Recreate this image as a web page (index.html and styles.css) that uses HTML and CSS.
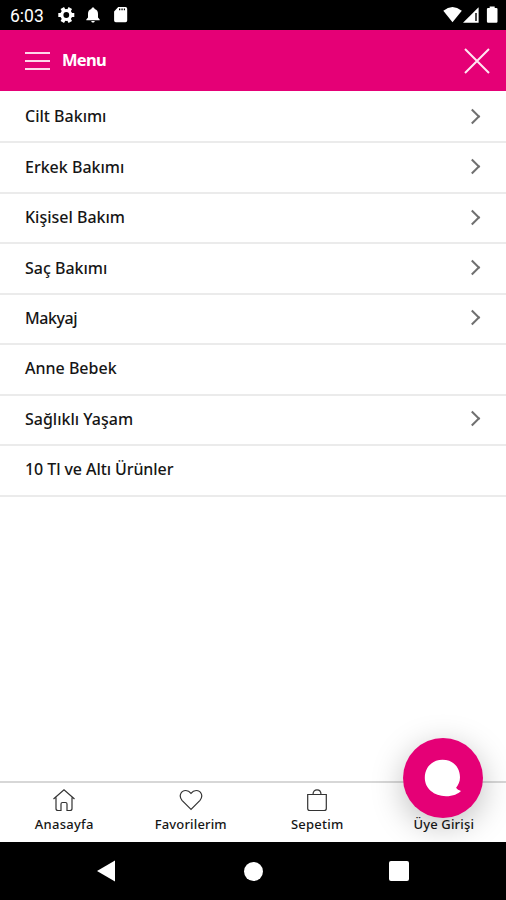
FILE: index.html
```html
<!DOCTYPE html>
<html lang="tr">
<head>
<meta charset="utf-8">
<title>Menu</title>
<link rel="stylesheet" href="styles.css">
</head>
<body>
<div class="screen">
  <div class="status">
    <span class="clock">6:03</span>
    <svg class="status-left" width="72" height="18" viewBox="0 0 72 18" fill="#fff">
      <g transform="translate(9.300 9)">
        <circle r="4.500" fill="none" stroke="#fff" stroke-width="3.200"/>
        <path stroke="#fff" stroke-width="4" d="M-4 -6.900l1.500 2.600M4 -6.900l-1.500 2.600M-4 6.900l1.500-2.600M4 6.900l-1.500-2.600M-8 0h3M5 0h3"/>
      </g>
      <path d="M36 1.500c1 0 1.600.6 1.600 1.600 2.500.7 3.400 2.600 3.400 4.900v3.500l1.700 1.900v.8H29.300v-.8l1.700-1.900V8c0-2.300.9-4.200 3.400-4.900 0-1 .6-1.600 1.600-1.600zM34.300 15h3.400c0 2-3.400 2-3.400 0z"/>
      <path fill-rule="evenodd" d="M61.200 1h7.300q1.700 0 1.700 1.700v11.800q0 1.700-1.700 1.700h-9.700q-1.700 0-1.700-1.700V5.500zM62 2.500v1.800h1.300V2.500zM64.400 2.500v1.800h1.300V2.500zM66.800 2.500v1.800h1.200V2.500z"/>
    </svg>
    <svg class="status-right" width="56" height="18" viewBox="0 0 56 18" fill="#fff">
      <path d="M.3 4.800Q9.500-2.600 18.800 4.800L9.500 16.200z"/>
      <path d="M20 16.800 35.600 1.200v15.600z"/><path d="M33 7v8" stroke="#000" stroke-width="1.400"/>
      <path d="M46.700.5h5v1.400h1.600q1.200 0 1.200 1.200v12.500q0 1.200-1.200 1.200h-8.200q-1.200 0-1.200-1.200V3.100q0-1.200 1.200-1.200h1.600z"/>
    </svg>
  </div>
  <header class="header">
    <svg width="25" height="20" viewBox="0 0 25 20" stroke="#ffd5ea" stroke-width="2"><path d="M0 2h25M0 10h25M0 18h25"/></svg>
    <h1 class="title">Menu</h1>
    <svg class="close" width="26" height="26" viewBox="0 0 26 26" stroke="#ffe6f2" stroke-width="2"><path d="M1 1l24 24M25 1 1 25"/></svg>
  </header>
  <ul class="menu">
    <li class="row"><span>Cilt Bakımı</span><i class="chevron"></i></li>
    <li class="row"><span>Erkek Bakımı</span><i class="chevron"></i></li>
    <li class="row"><span>Kişisel Bakım</span><i class="chevron"></i></li>
    <li class="row"><span>Saç Bakımı</span><i class="chevron"></i></li>
    <li class="row"><span class="tight">Makyaj</span><i class="chevron"></i></li>
    <li class="row"><span>Anne Bebek</span></li>
    <li class="row"><span>Sağlıklı Yaşam</span><i class="chevron"></i></li>
    <li class="row"><span class="snug">10 Tl ve Altı Ürünler</span></li>
  </ul>
  <nav class="tabs">
    <a class="tab">
      <svg width="24" height="24" viewBox="0 0 24 24"><path d="M1.500 11 12 1.800 22.500 11M4 9.500V20.500q0 2 2 2H9v-6.500q0-1.500 1.500-1.500h3q1.500 0 1.500 1.500v6.500h3q2 0 2-2V9.500"/></svg>
      <span class="wide">Anasayfa</span>
    </a>
    <a class="tab">
      <svg width="24" height="24" viewBox="0 0 24 24"><path d="M12 21.300 3 12.300C-.6 8.200 1.800 2.500 6.800 2.500 9.500 2.500 11 4 12 5.300 13 4 14.500 2.500 17.200 2.500 22.200 2.500 24.600 8.200 21 12.300z"/></svg>
      <span class="spaced">Favorilerim</span>
    </a>
    <a class="tab">
      <svg width="24" height="24" viewBox="0 0 24 24"><path d="M2.700 6.500h18.600V20.500q0 2-2 2H4.700q-2 0-2-2zM8 6.500C8 .2 16 .2 16 6.500"/></svg>
      <span class="wide">Sepetim</span>
    </a>
    <a class="tab member">
      <span class="spaced">Üye Girişi</span>
    </a>
    <button class="chat" aria-label="Chat">
      <svg width="38" height="38" viewBox="0 0 38 38" fill="#fff"><path d="M18.500.8C29 .8 36 8 36 18.300c0 4.600-1.600 7.500-3.900 10.500 1 1.500 2.600 2.500 4.900 3.100-2.600 2.600-8 5.300-15 5.300C10 37.200.8 29.500.8 18.800.8 8 8.500.8 18.500.8z"/></svg>
    </button>
  </nav>
  <div class="system">
    <svg width="18" height="22" viewBox="0 0 18 22"><path d="M0 11 18 .5v21z" fill="#fff"/></svg>
    <i class="home"></i>
    <i class="recent"></i>
  </div>
</div>
</body>
</html>
```

FILE: styles.css
```css
* { box-sizing: border-box; }
body {
  margin: 0;
  background: #fff;
  color: #161616;
  font-family: "Noto Sans", sans-serif;
}
.screen {
  display: flex;
  flex-direction: column;
  width: 506px;
  height: 900px;
  overflow: hidden;
}
.status {
  display: flex;
  align-items: center;
  height: 30px;
  padding: 0 7px 0 10px;
  background: #000;
  color: #fff;
  flex: none;
}
.clock {
  width: 47px;
  font: 400 17.500px/30px Roboto, sans-serif;
  padding-top: 2px;
}
.status-right { margin-left: auto; }
.header {
  display: flex;
  align-items: center;
  flex: none;
  height: 61px;
  padding: 0 16px 0 25px;
  background: #e50076;
}
.title {
  margin: -1px 0 0 12px;
  color: #fff;
  font-size: 16.500px;
  font-weight: 700;
  line-height: 24px;
  letter-spacing: -0.750px;
}
.close { margin-left: auto; }
.menu {
  flex: 1;
  margin: 0;
  padding: 2px 0 0;
  list-style: none;
}
.row {
  display: flex;
  align-items: center;
  justify-content: space-between;
  height: 50.450px;
  padding: 0 28px 2px 25px;
  border-bottom: 2px solid #ebebeb;
  font-size: 16px;
  font-weight: 500;
  white-space: nowrap;
}
.tight { letter-spacing: -0.450px; }
.snug { letter-spacing: -0.080px; }
.chevron {
  width: 11px;
  height: 11px;
  border: solid #707070;
  border-width: 2px 2px 0 0;
  transform: rotate(45deg);
}
.tabs {
  position: relative;
  display: grid;
  grid-template-columns: repeat(4, 1fr);
  flex: none;
  height: 61px;
  padding-left: 1px;
  margin-right: -1px;
  border-top: 2px solid #d7d7d7;
}
.tab {
  display: flex;
  flex-direction: column;
  align-items: center;
  padding-top: 5px;
  font-size: 13px;
  font-weight: 500;
  line-height: 18px;
}
.spaced { letter-spacing: 0.150px; }
.wide { letter-spacing: 0.250px; }
.tab svg {
  fill: none;
  stroke: #333;
  stroke-width: 1.200;
  margin-bottom: 3px;
}
.member { justify-content: flex-end; padding-bottom: 9px; z-index: 2; }
.chat {
  position: absolute;
  top: -45px;
  right: 24px;
  display: grid;
  place-items: center;
  width: 80px;
  height: 80px;
  padding: 0;
  border: 0;
  border-radius: 50%;
  background: #e50076;
  box-shadow: 0 8px 32px rgba(0, 0, 0, .25);
}
.system {
  position: relative;
  z-index: 3;
  display: flex;
  align-items: center;
  flex: none;
  height: 58px;
  padding-left: 97px;
  background: #000;
}
.home {
  width: 19px;
  height: 19px;
  margin-left: 129px;
  border-radius: 50%;
  background: #fff;
}
.recent {
  width: 20px;
  height: 20px;
  margin-left: 126px;
  border-radius: 2px;
  background: #fff;
}
```
